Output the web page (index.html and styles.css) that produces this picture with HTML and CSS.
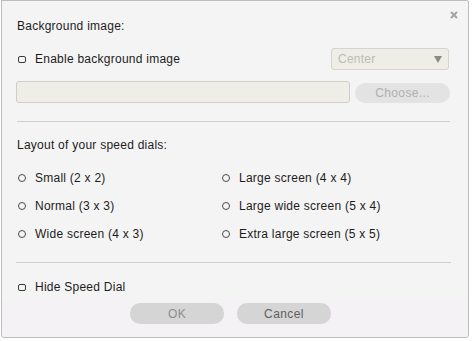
FILE: index.html
```html
<!DOCTYPE html>
<html>
<head>
    <title>Speed Dial Settings</title>
    <link rel="stylesheet" href="styles.css">
</head>
<body>
    <div class="dialog">
        <button class="close-btn" title="Close">
            <svg width="8" height="8" viewBox="0 0 8 8">
                <path d="M1 1 L7 7 M7 1 L1 7" stroke="#a3a3a3" stroke-width="2"/>
            </svg>
        </button>

        <div class="dialog-body">
            <div class="section-title">Background image:</div>

            <div class="row row-between bg-toggle">
                <label class="check">
                    <span class="box"></span>
                    Enable background image
                </label>
                <div class="select">
                    <span>Center</span>
                    <span class="arrow"></span>
                </div>
            </div>

            <div class="row file-row">
                <div class="text-input"></div>
                <button class="pill-btn choose-btn">Choose...</button>
            </div>

            <div class="divider first"></div>

            <div class="section-title">Layout of your speed dials:</div>

            <div class="radio-grid">
                <label class="radio"><span class="dot"></span>Small (2 x 2)</label>
                <label class="radio"><span class="dot"></span>Large screen (4 x 4)</label>
                <label class="radio"><span class="dot"></span>Normal (3 x 3)</label>
                <label class="radio"><span class="dot"></span>Large wide screen (5 x 4)</label>
                <label class="radio"><span class="dot"></span>Wide screen (4 x 3)</label>
                <label class="radio"><span class="dot"></span>Extra large screen (5 x 5)</label>
            </div>

            <div class="divider second"></div>

            <div class="row hide-row">
                <label class="check">
                    <span class="box"></span>
                    Hide Speed Dial
                </label>
            </div>
        </div>

        <div class="dialog-footer">
            <button class="pill-btn ok-btn">OK</button>
            <button class="pill-btn cancel-btn">Cancel</button>
        </div>
    </div>
</body>
</html>
```

FILE: styles.css
```css
* {
    margin: 0;
    padding: 0;
    box-sizing: border-box;
    font-family: 'Liberation Sans', Arial, sans-serif;
}

body {
    background: #ffffff;
    font-size: 12px;
    letter-spacing: 0.25px;
    color: #1c1c1c;
}

.dialog {
    position: relative;
    margin-left: 1px;
    width: 468px;
    height: 338px;
    background: #f4f4f4;
    border: 1px solid #bdbdbd;
    border-radius: 0 2px 3px 3px;
    display: flex;
    flex-direction: column;
}

.close-btn {
    position: absolute;
    top: 10px;
    right: 10px;
    border: none;
    background: none;
    display: flex;
}

.dialog-body {
    padding: 15px 18px 0 14px;
    flex: 1;
}

.section-title {
    height: 20px;
    line-height: 20px;
    padding-left: 1px;
}

.row {
    display: flex;
    align-items: center;
}

.row-between {
    justify-content: space-between;
}

.bg-toggle {
    margin-top: 12px;
    height: 22px;
}

.check {
    display: flex;
    align-items: center;
    line-height: 20px;
}

.box {
    width: 8px;
    height: 7px;
    border: 1px solid #3a3a3a;
    border-radius: 2px;
    margin: 0 9px 0 2px;
}

.select {
    flex: none;
    width: 118px;
    height: 22px;
    margin-right: 1px;
    background: #eeede6;
    border: 1px solid #d6d5cc;
    border-radius: 3px;
    display: flex;
    align-items: center;
    justify-content: space-between;
    padding: 0 6px 0 6px;
    color: #bcbcb6;
}

.arrow {
    width: 0;
    height: 0;
    border-left: 4px solid transparent;
    border-right: 4px solid transparent;
    border-top: 7px solid #8a8a8a;
}

.file-row {
    margin-top: 11px;
    height: 22px;
    gap: 5px;
}

.text-input {
    width: 335px;
    height: 22px;
    background: #eeede6;
    border: 1px solid #cfcfc8;
    border-radius: 3px;
}

.pill-btn {
    border: none;
    border-radius: 10px;
    height: 20px;
    font-size: 12px;
    letter-spacing: 0.4px;
}

.choose-btn {
    width: 95px;
    margin-top: 1px;
    background: #e3e3e3;
    color: #b0b0b0;
}

.divider {
    height: 1px;
    background: #cfcfcf;
}

.divider.first {
    margin-top: 18px;
    margin-left: 1px;
}

.divider.first + .section-title {
    margin-top: 13px;
}

.radio-grid {
    margin-top: 13px;
    display: grid;
    grid-template-columns: 204px 1fr;
    row-gap: 8px;
}

.radio {
    display: flex;
    align-items: center;
    height: 20px;
}

.dot {
    width: 8px;
    height: 8px;
    border: 1px solid #4a4a4a;
    border-radius: 50%;
    margin: 0 9px 0 2px;
}

.divider.second {
    margin-top: 18px;
    margin-left: 0;
    margin-right: -1px;
}

.hide-row {
    margin-top: 14px;
    height: 20px;
}

.dialog-footer {
    height: 38px;
    background: #f5f2f5;
    display: flex;
    justify-content: center;
    gap: 13px;
    padding-top: 4px;
    padding-right: 9px;
    border-radius: 0 0 3px 3px;
}

.ok-btn,
.cancel-btn {
    width: 94px;
    height: 21px;
    background: #d5d5d5;
}

.ok-btn {
    color: #8e8e8e;
}

.cancel-btn {
    color: #5e5e5e;
}
```
